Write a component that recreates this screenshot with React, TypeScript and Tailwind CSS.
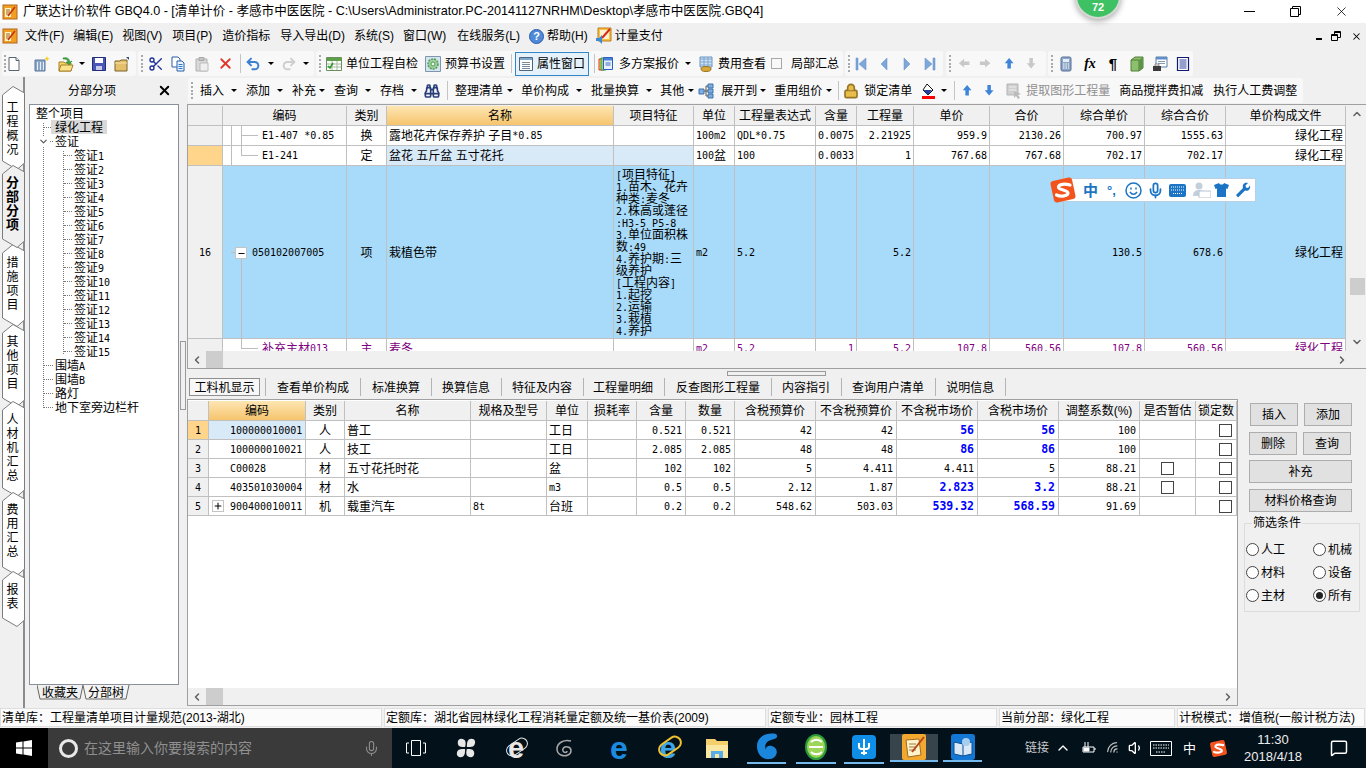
import type { ReactNode } from 'react';
import {
  Binoculars, ChevronDown, ChevronLeft, ChevronRight, ChevronUp, Lock, MessageSquare, Mic, Minus, Plus, Redo2,
  Scissors, Undo2, Volume1, Wifi, X,
} from 'lucide-react';

const mono = 'font-[family-name:"DejaVu_Sans_Mono",monospace] text-[10px]';
const line = 'border-[#c0c0c0]';
const topCols = 'grid grid-cols-[35px_124px_40px_227px_80px_41px_81px_41px_57px_76px_74px_81px_81px_120px]';
const lowCols = 'grid grid-cols-[21px_97px_39px_126px_76px_41px_49px_49px_49px_81px_81px_81px_81px_81px_56px_41px]';

const M = ({ children }: { children: ReactNode }) => <span className={mono}>{children}</span>;

// ascii parts of a mixed string get the narrow mono face
const Mix = ({ text }: { text: string }) => (
  <>
    {text.split(/([\x00-\x7f]+)/).map((p, i) => (i % 2 ? <M key={i}>{p}</M> : p))}
  </>
);

function C({ children, className = '' }: { children?: ReactNode; className?: string }) {
  return (
    <div className={`relative flex items-center overflow-hidden whitespace-nowrap border-r border-b ${line} ${className.includes('pt-[') ? '' : 'pt-px'} ${className}`}>
      {children}
    </div>
  );
}

// small toolbar pieces
const Arrow = ({ c = '' }: { c?: string }) => (
  <span className={`h-0 w-0 shrink-0 border-x-[3px] border-t-[3px] border-x-transparent border-t-black ${c}`} />
);
const Sep = ({ c = '' }: { c?: string }) => <span className={`h-[19px] w-px shrink-0 bg-[#c4c4c4] ${c}`} />;
const Grip = () => (
  <span className="flex h-[17px] w-[2px] shrink-0 flex-col justify-between">
    {[0, 1, 2, 3, 4].map((i) => <span key={i} className="h-[2px] w-[2px] bg-[#a9a9a9]" />)}
  </span>
);

function Svg({ children, c = '', s = 16 }: { children: ReactNode; c?: string; s?: number }) {
  return <svg width={s} height={s} viewBox="0 0 16 16" className={`shrink-0 ${c}`}>{children}</svg>;
}

const AppIcon = ({ c = '' }: { c?: string }) => (
  <Svg c={c}>
    <rect x="1" y="1" width="14" height="14" fill="#f0a020" stroke="#b5651d" />
    <path d="M3 4h6v9H3z" fill="#fff3c8" />
    <path d="M4 6h4M4 8h4M4 10h4" stroke="#a06020" />
    <path d="M6 12L13 3" stroke="#c0301a" strokeWidth="1.6" />
  </Svg>
);
const PageIc = ({ c = '' }: { c?: string }) => (
  <Svg c={c}><path d="M3 1.5h7l3 3v10H3z" fill="#fff" stroke="#59656f" /><path d="M10 1.5v3h3" fill="#dfe6ee" stroke="#59656f" /></Svg>
);
const MultiIc = ({ c = '' }: { c?: string }) => (
  <Svg c={c}>
    <path d="M1 4h10v11H1z" fill="#8ba6c9" stroke="#5d7699" />
    <path d="M3 6h1v8H3zM6 6h1v8H6zM9 6h1v8H9z" fill="#e8eef6" />
    <path d="M13 0l.8 2 2 .8-2 .8-.8 2-.8-2-2-.8 2-.8z" fill="#f4d020" />
  </Svg>
);
const OpenIc = ({ c = '' }: { c?: string }) => (
  <Svg c={c}>
    <path d="M1 6h5l1 1h6v8H1z" fill="#f4d568" stroke="#a8802a" />
    <path d="M1 15l2-6h12l-2 6z" fill="#fbe38c" stroke="#a8802a" />
    <path d="M5 2c4-1 6 0 7 4l2-1-3 4-3-3 2 .2C9.500 3.500 8 3 5 3z" fill="#3fa83f" stroke="#1f7a2a" strokeWidth=".5" />
  </Svg>
);
const SaveIc = ({ c = '' }: { c?: string }) => (
  <Svg c={c}>
    <path d="M1.500 1.500h13v13h-13z" fill="#4a57b5" stroke="#232c78" />
    <path d="M4 2h8v5H4z" fill="#fff" />
    <path d="M5 10h6v4H5z" fill="#c7cce8" />
  </Svg>
);
const FolderIc = ({ c = '' }: { c?: string }) => (
  <Svg c={c}>
    <path d="M1 5h5l1-1h6v11H1z" fill="#e4c06a" stroke="#7a6026" />
    <path d="M1 7h12" stroke="#f6e3a8" />
    <path d="M12 1l3 0 0 3z" fill="#33506e" />
  </Svg>
);
const CopyIc = ({ c = '' }: { c?: string }) => (
  <Svg c={c}>
    <path d="M2 1h6l2 2v8H2z" fill="#fff" stroke="#2a5fa8" />
    <path d="M7 5h5l2 2v8H7z" fill="#eaf3fc" stroke="#2a5fa8" />
    <path d="M8.500 8.500h4M8.500 10.500h4M8.500 12.500h4" stroke="#2a7ad0" />
  </Svg>
);
const PasteIc = ({ c = '' }: { c?: string }) => (
  <Svg c={c}>
    <path d="M2 3h11v12H2z" fill="#d9d9d9" stroke="#b0b0b0" />
    <path d="M5 1.500h5v3H5z" fill="#c4c4c4" stroke="#a8a8a8" />
    <path d="M6 7h8v8H6z" fill="#efefef" stroke="#bcbcbc" />
  </Svg>
);
const SheetIc = ({ c = '' }: { c?: string }) => (
  <Svg c={c}>
    <path d="M.5 1.500h15v13H.5z" fill="#fff" stroke="#6b8f5a" />
    <path d="M1 2h14v3H1z" fill="#5ea04a" />
    <path d="M6 5v9M11 5v9M1 8h14M1 11h14" stroke="#a8b8a0" />
    <path d="M2 10l2 2 3-5" fill="none" stroke="#2a9a2a" strokeWidth="1.500" />
  </Svg>
);
const GearIc = ({ c = '' }: { c?: string }) => (
  <Svg c={c}>
    <path d="M.5.5h15v15H.5z" fill="#d6e4ef" stroke="#7c97ae" />
    <circle cx="8" cy="8" r="5" fill="#9ed09a" stroke="#4e9a5a" strokeDasharray="2 1" strokeWidth="1.500" />
    <circle cx="8" cy="8" r="2" fill="#f0f6ee" stroke="#4e9a5a" />
  </Svg>
);
const PropIc = ({ c = '' }: { c?: string }) => (
  <Svg c={c}>
    <path d="M1.500 1.500h13v13h-13z" fill="#fff" stroke="#4d6780" />
    <path d="M2 2h12v2H2z" fill="#7fa7cc" />
    <path d="M4 6.500h8M4 8.500h8M4 10.500h8M4 12.500h8" stroke="#7a8a97" />
  </Svg>
);
const SchemeIc = ({ c = '' }: { c?: string }) => (
  <Svg c={c}>
    <path d="M1 3h5v11H1z" fill="#f3dc4c" stroke="#d33" />
    <path d="M3 2h5v12H3z" fill="#9bd07e" stroke="#3a9a3a" />
    <path d="M5.500 1.500h9v12h-9z" fill="#e8f0fb" stroke="#2a5fc8" />
    <path d="M6 2h8v2.500H6z" fill="#4a80d8" /><path d="M7.500 7h5M7.500 9h5" stroke="#3a68c0" />
  </Svg>
);
const CostIc = ({ c = '' }: { c?: string }) => (
  <Svg c={c}>
    <path d="M2 1h12v10H2z" fill="#cfe2f5" stroke="#6a94bd" />
    <path d="M2 3h12M2 6h12M2 9h12M6 1v10M10 1v10" stroke="#7ea7cf" />
    <ellipse cx="8" cy="13" rx="5" ry="2.500" fill="#d8a83a" stroke="#9c7420" />
  </Svg>
);
const NavIc = ({ d, c = '', fill = '#7ea8dc' }: { d: string; c?: string; fill?: string }) => (
  <Svg c={c}><path d={d} fill={fill} stroke="#5e8bc4" strokeWidth=".5" /></Svg>
);
const ArrowIc = ({ d, fill, c = '' }: { d: string; fill: string; c?: string }) => (
  <Svg c={c} s={14}><path d={d} fill={fill} /></Svg>
);
const CalcIc = ({ c = '' }: { c?: string }) => (
  <Svg c={c}>
    <rect x="3" y="1" width="10" height="14" rx="1.500" fill="#8ea6c8" stroke="#566f95" />
    <path d="M5 3h6v3H5z" fill="#e4eefa" />
    <path d="M5 8h1.500M7.500 8H9M10 8h1M5 10h1.500M7.500 10H9M10 10h1M5 12h1.500M7.500 12H9M10 12h1" stroke="#fff" />
  </Svg>
);
const CubeIc = ({ c = '' }: { c?: string }) => (
  <Svg c={c}>
    <path d="M2 4l4-3h8v11l-4 3H2z" fill="#8cc06c" stroke="#557f3d" />
    <path d="M2 4h8v11" fill="none" stroke="#557f3d" /><path d="M10 4l4-3v11l-4 3z" fill="#5c9545" />
  </Svg>
);
const WinPrintIc = ({ c = '' }: { c?: string }) => (
  <Svg c={c}>
    <path d="M4 1h11v10H4z" fill="#fff" stroke="#5a7fa8" /><path d="M4 1h11v2.500H4z" fill="#5e8fc8" />
    <path d="M6 5.500h7M6 7.500h7" stroke="#8a9cb0" />
    <path d="M1 10h8v5H1z" fill="#3a3a3a" /><path d="M3 8h4v2H3z" fill="#eee" stroke="#444" strokeWidth=".5" />
  </Svg>
);
const ListIc = ({ c = '' }: { c?: string }) => (
  <Svg c={c}>
    <path d="M2.500 1.500h11v13h-11z" fill="#fff" stroke="#101a70" strokeWidth="1.200" />
    <path d="M4.500 4h7M4.500 6h7M4.500 8h7M4.500 10h7M4.500 12h7" stroke="#2a3fa0" />
  </Svg>
);
const TreeIc = ({ c = '' }: { c?: string }) => (
  <Svg c={c}>
    <path d="M1 6h5v5H1zM10 1h5v4h-5zM10 6h5v4h-5zM10 11h5v4h-5z" fill="#7eaee0" stroke="#3e73ad" />
    <path d="M6 8h4M8 3h2M8 13h2M8 3v10" fill="none" stroke="#555" />
  </Svg>
);
const PaintIc = ({ c = '' }: { c?: string }) => (
  <Svg c={c}>
    <path d="M7 1l6 6-5 5-5-5z" fill="#fff" stroke="#111" />
    <path d="M3 7h9l-4 5z" fill="#1f3ea0" />
    <path d="M2 13h13v3H2z" fill="#f00" />
  </Svg>
);
const ExtractIc = ({ c = '' }: { c?: string }) => (
  <Svg c={c}>
    <path d="M1 1h11v11H1z" fill="#cfcfcf" stroke="#b5b5b5" />
    <path d="M3 4h7M3 7h7" stroke="#eee" /><path d="M8 8l7 3-3 1 2 3-2 1-2-3-2 2z" fill="#bbb" />
  </Svg>
);
const SogouLogo = ({ size = 28, c = '' }: { size?: number; c?: string }) => (
  <svg width={size} height={size} viewBox="0 0 28 28" className={`shrink-0 ${c}`}>
    <rect x="3" y="3" width="22" height="22" rx="3" transform="rotate(-12 14 14)" fill="#f3541d" />
    <path d="M21 9c-5-1.500-11-1-11.500 2S19 14 19 17s-7 4-11.500 2" fill="none" stroke="#fff" strokeWidth="3.200" strokeLinecap="round" />
  </svg>
);

function VText({ text, bold }: { text: string; bold?: boolean }) {
  return (
    <div className={`relative z-10 flex flex-col items-center ${bold ? 'text-[13px] font-bold' : ''}`}>
      {text.split('').map((ch, i) => <span key={i} className="h-[14px] leading-[14px]">{ch}</span>)}
    </div>
  );
}

const tabs = [
  { text: '工程概况', h: 'h-[84px]', svgH: 84, mt: '', pt: 'pt-[15px]' },
  { text: '分部分项', h: 'h-[83px]', svgH: 83, mt: '-mt-[5px]', pt: 'pt-[11px]', active: true },
  { text: '措施项目', h: 'h-[83px]', svgH: 83, mt: '-mt-[4px]', pt: 'pt-[12px]' },
  { text: '其他项目', h: 'h-[83px]', svgH: 83, mt: '-mt-[3px]', pt: 'pt-[11px]' },
  { text: '人材机汇总', h: 'h-[96px]', svgH: 96, mt: '-mt-[6px]', pt: 'pt-[12px]' },
  { text: '费用汇总', h: 'h-[84px]', svgH: 84, mt: '-mt-[5px]', pt: 'pt-[11px]' },
  { text: '报表', h: 'h-[56px]', svgH: 56, mt: '-mt-[5px]', pt: 'pt-[12px]' },
];

function SideTabs() {
  return (
    <div className="flex w-[25px] shrink-0 flex-col border-r-2 border-[#8c8c8c] pt-[9px] pl-[2px]">
      {tabs.map((t) => (
        <div key={t.text} className={`relative w-[23px] shrink-0 pr-[2px] ${t.h} ${t.mt} ${t.pt} ${t.active ? 'z-10' : ''}`}>
          <svg width="23" height={t.svgH} className="absolute left-0 top-0">
            <path
              d={`M.5 9L11 .5 22.500 7V${t.svgH - 7}L15 ${t.svgH - .5}.5 ${t.svgH - 9}z`}
              fill={t.active ? '#f0f0f0' : '#fff'}
              stroke="#7c7c7c"
            />
          </svg>
          <VText text={t.text} bold={t.active} />
        </div>
      ))}
    </div>
  );
}

function TreeRow({ level, children, sel }: { level: 1 | 2; children: ReactNode; sel?: boolean }) {
  return (
    <div className={`flex h-[14px] items-center ${level === 1 ? 'pl-[14px]' : 'pl-[34px]'}`}>
      <span className={`mr-[2px] shrink-0 border-t border-dotted border-[#777] ${level === 1 ? 'w-[9px]' : 'w-[8px]'}`} />
      <span className={`h-[14px] whitespace-nowrap pt-px leading-[14px] ${sel ? 'bg-[#d9d9d9] px-[4px] -ml-[4px]' : ''}`}>{children}</span>
    </div>
  );
}

function Tree() {
  const certs = Array.from({ length: 15 }, (_, i) => i + 1);
  return (
    <div className="relative h-[581px] w-[150px] overflow-hidden border border-[#8a8f99] bg-white pt-px">
      <span className="absolute left-[13px] top-[18px] h-[285px] border-l border-dotted border-[#777]" />
      <span className="absolute left-[33px] top-[46px] h-[203px] border-l border-dotted border-[#777]" />
      <div className="h-[14px] pl-[6px] pt-px leading-[14px]">整个项目</div>
      <TreeRow level={1} sel>绿化工程</TreeRow>
      <div className="relative">
        <TreeRow level={1}>签证</TreeRow>
        <ChevronDown size={11} strokeWidth={2.5} className="absolute left-[8px] top-[2px] bg-white text-[#555]" />
      </div>
      {certs.map((n) => (
        <TreeRow key={n} level={2}>签证<M>{n}</M></TreeRow>
      ))}
      <TreeRow level={1}>围墙<M>A</M></TreeRow>
      <TreeRow level={1}>围墙<M>B</M></TreeRow>
      <TreeRow level={1}>路灯</TreeRow>
      <TreeRow level={1}>地下室旁边栏杆</TreeRow>
    </div>
  );
}

function BottomTabs() {
  return (
    <div className="flex h-[19px] items-start pl-[8px]">
      <div className="relative flex h-[15px] w-[46px] justify-center pt-px">
        <svg width="46" height="15" className="absolute left-0 top-0"><path d="M0 0L3 14H43L46 0" fill="#f0f0f0" stroke="#666" /></svg>
        <span className="relative leading-[14px]">收藏夹</span>
      </div>
      <div className="relative -ml-px flex h-[15px] w-[48px] justify-center pt-px">
        <svg width="48" height="15" className="absolute left-0 top-0"><path d="M1 0L4 14H44L47 0" fill="#f4f4f4" stroke="#666" /></svg>
        <span className="relative leading-[14px]">分部树</span>
      </div>
    </div>
  );
}

function Toolbar1() {
  const grp = 'flex h-[25px] shrink-0 items-center rounded-[3px] bg-[#f8f8f8]';
  return (
    <div className="flex h-[28px] items-center pl-[2px] pt-[1px]">
      <div className={`${grp} w-[134px] pl-[2px]`}>
        <Grip /><PageIc />
        <MultiIc c="ml-[12px]" /><OpenIc c="ml-[8px]" /><Arrow c="ml-[5px]" /><SaveIc c="ml-[6px]" /><FolderIc c="ml-[7px]" />
      </div>
      <div className={`${grp} ml-[2px] w-[176px] pl-[3px]`}>
        <Grip />
        <Scissors size={16} className="ml-[5px] shrink-0 text-[#1c2f9a]" />
        <CopyIc c="ml-[6px]" /><PasteIc c="ml-[8px]" />
        <X size={17} strokeWidth={2.5} className="ml-[7px] shrink-0 text-[#e0352b]" />
        <Sep c="ml-[6px]" />
        <Undo2 size={16} strokeWidth={3} className="ml-[4px] shrink-0 text-[#3d7fd1]" />
        <Arrow c="ml-[7px]" />
        <Redo2 size={16} strokeWidth={3} className="ml-[7px] shrink-0 text-[#cfcfcf]" />
        <Arrow c="ml-[6px] border-t-[#9a9a9a]" />
      </div>
      <div className={`${grp} ml-[2px] w-[527px] pl-[3px]`}>
        <Grip /><SheetIc c="ml-[5px]" />
        <span className="ml-[4px]">单位工程自检</span>
        <GearIc c="ml-[7px]" />
        <span className="ml-[4px]">预算书设置</span>
        <Sep c="ml-[6px]" />
        <div className="ml-[3px] flex h-[24px] w-[74px] shrink-0 items-center border border-[#2f86c8] bg-[#e5f1fb] pl-[2px]">
          <PropIc /><span className="ml-[3px]">属性窗口</span>
        </div>
        <Sep c="ml-[5px]" />
        <SchemeIc c="ml-[3px]" />
        <span className="ml-[5px]">多方案报价</span>
        <Arrow c="ml-[6px]" />
        <CostIc c="ml-[7px]" />
        <span className="ml-[4px]">费用查看</span>
        <span className="ml-[5px] h-[11px] w-[11px] shrink-0 border border-[#a8a8a8] bg-[#f8f8f8]" />
        <span className="ml-[9px]">局部汇总</span>
      </div>
      <div className={`${grp} ml-[2px] w-[98px] pl-[3px]`}>
        <Grip />
        <NavIc c="ml-[3px]" d="M3 2h2v12H3zM13 2v12L6 8z" />
        <NavIc c="ml-[7px]" d="M11 2v12L5 8z" />
        <NavIc c="ml-[7px]" d="M5 2v12l6-6z" />
        <NavIc c="ml-[7px]" d="M11 2h2v12h-2zM3 2v12l7-6z" />
      </div>
      <div className={`${grp} ml-[3px] w-[100px] pl-[3px]`}>
        <Grip />
        <ArrowIc c="ml-[7px]" fill="#c8c8c8" d="M1 7l6-5v3h6v4H7v3z" />
        <ArrowIc c="ml-[7px]" fill="#c8c8c8" d="M13 7L7 2v3H1v4h6v3z" />
        <ArrowIc c="ml-[10px]" fill="#3e84d8" d="M7 1l5 6H9v6H5V7H2z" />
        <ArrowIc c="ml-[8px]" fill="#c8c8c8" d="M7 13l5-6H9V1H5v6H2z" />
      </div>
      <div className={`${grp} ml-[2px] w-[145px] pl-[3px]`}>
        <Grip />
        <CalcIc c="ml-[5px]" />
        <span className="ml-[8px] w-[16px] text-center font-[family-name:'Liberation_Serif',serif] text-[14px] font-bold italic">fx</span>
        <span className="ml-[7px] w-[16px] text-center text-[15px] font-bold">¶</span>
        <CubeIc c="ml-[8px]" /><WinPrintIc c="ml-[7px]" /><ListIc c="ml-[7px]" />
      </div>
    </div>
  );
}

function Toolbar2() {
  return (
    <div className="flex h-[27px] items-start pt-[1px] pl-px">
      <div className="flex h-[25px] w-[1115px] shrink-0 items-center rounded-[3px] bg-[#f8f8f8] pl-[3px]">
        <Grip />
        <span className="ml-[7px]">插入</span><Arrow c="ml-[7px]" />
        <span className="ml-[9px]">添加</span><Arrow c="ml-[7px]" />
        <span className="ml-[9px]">补充</span><Arrow c="ml-[3px]" />
        <span className="ml-[9px]">查询</span><Arrow c="ml-[7px]" />
        <span className="ml-[9px]">存档</span><Arrow c="ml-[7px]" />
        <Binoculars size={16} strokeWidth={2.5} className="ml-[7px] shrink-0 text-[#2a3f7a]" />
        <Sep c="ml-[7px]" />
        <span className="ml-[7px]">整理清单</span><Arrow c="ml-[4px]" />
        <span className="ml-[8px]">单价构成</span><Arrow c="ml-[7px]" />
        <span className="ml-[9px]">批量换算</span><Arrow c="ml-[7px]" />
        <span className="ml-[8px]">其他</span><Arrow c="ml-[4px]" />
        <TreeIc c="ml-[4px]" />
        <span className="ml-[7px]">展开到</span><Arrow c="ml-[3px]" />
        <span className="ml-[8px]">重用组价</span><Arrow c="ml-[4px]" />
        <Sep c="ml-[6px]" />
        <Lock size={16} strokeWidth={2.5} className="ml-[4px] shrink-0 fill-[#e8bd4a] text-[#96742a]" />
        <span className="ml-[5px]">锁定清单</span>
        <PaintIc c="ml-[8px]" /><Arrow c="ml-[5px]" />
        <Sep c="ml-[7px]" />
        <ArrowIc c="ml-[6px]" fill="#3e84d8" d="M7 1l5 6H9v6H5V7H2z" />
        <ArrowIc c="ml-[8px]" fill="#3e84d8" d="M7 13l5-6H9V1H5v6H2z" />
        <ExtractIc c="ml-[9px]" />
        <span className="ml-[4px] text-[#8f8f8f]">提取图形工程量</span>
        <span className="ml-[9px]">商品搅拌费扣减</span>
        <span className="ml-[10px]">执行人工费调整</span>
      </div>
    </div>
  );
}

const HL = 'absolute border-[#bdbdbd]';

function Head({ labels, orange }: { labels: string[]; orange: number }) {
  return (
    <>
      {labels.map((l, i) => (
        <C key={i} className={`justify-center ${i === orange ? 'bg-gradient-to-b from-[#fde6b2] to-[#f6c46c]' : 'bg-[#f0f0f0]'}`}>{l}</C>
      ))}
    </>
  );
}

const features = [
  '[项目特征]', '1.苗木、花卉', '种类:麦冬', '2.株高或蓬径', ':H3-5 P5-8', '3.单位面积株', '数:49', '4.养护期:三',
  '级养护', '[工程内容]', '1.起挖', '2.运输', '3.栽植', '4.养护',
];

function TopGrid() {
  const num = `justify-end pr-[2px] ${mono}`;
  const lft = `pl-[2px] ${mono}`;
  return (
    <div className="flex h-[265px] shrink-0 flex-col border-t border-b border-l border-[#a0a0a0] pt-px">
      <div className="flex h-[245px]">
        <div className="w-[1158px] shrink-0 overflow-hidden">
          <div className={`${topCols} h-[20px]`}>
            <Head orange={3} labels={['', '编码', '类别', '名称', '项目特征', '单位', '工程量表达式', '含量', '工程量', '单价', '合价', '综合单价', '综合合价', '单价构成文件']} />
          </div>
          <div className={`${topCols} h-[20px] bg-white`}>
            <C className="bg-[#f0f0f0]" />
            <C className={`pl-[39px] ${mono}`}>
              <span className={`${HL} left-[8px] top-0 h-full border-l`} />
              <span className={`${HL} left-[18px] top-0 h-full border-l`} />
              <span className={`${HL} left-[18px] top-[9px] w-[17px] border-t`} />
              E1-407 *0.85
            </C>
            <C className="justify-center">换</C>
            <C className="pl-[2px]">露地花卉保存养护 子目<M>*0.85</M></C>
            <C />
            <C className={lft}>100m2</C>
            <C className={lft}>QDL*0.75</C>
            <C className={num}>0.0075</C>
            <C className={num}>2.21925</C>
            <C className={num}>959.9</C>
            <C className={num}>2130.26</C>
            <C className={num}>700.97</C>
            <C className={num}>1555.63</C>
            <C className="justify-end pr-[2px]">绿化工程</C>
          </div>
          <div className={`${topCols} h-[20px] bg-white`}>
            <C className="bg-[#ffd58c]" />
            <C className={`pl-[39px] ${mono}`}>
              <span className={`${HL} left-[8px] top-0 h-full border-l`} />
              <span className={`${HL} left-[18px] top-0 h-[9px] border-l`} />
              <span className={`${HL} left-[18px] top-[9px] w-[17px] border-t`} />
              E1-241
            </C>
            <C className="justify-center">定</C>
            <C className="bg-[#d8e9f8] pl-[2px]">盆花 五斤盆 五寸花托</C>
            <C className="bg-[#d8e9f8]" />
            <C className="pl-[2px]"><M>100</M>盆</C>
            <C className={lft}>100</C>
            <C className={num}>0.0033</C>
            <C className={num}>1</C>
            <C className={num}>767.68</C>
            <C className={num}>767.68</C>
            <C className={num}>702.17</C>
            <C className={num}>702.17</C>
            <C className="justify-end pr-[2px]">绿化工程</C>
          </div>
          <div className={`${topCols} h-[173px] bg-[#a8daf9]`}>
            <C className={`bg-[#f0f0f0] justify-center ${mono}`}>16</C>
            <C className={`pl-[29px] ${mono}`}>
              <span className={`${HL} left-[8px] top-[86px] w-[4px] border-t`} />
              <span className="absolute left-[12px] top-[81px] flex h-[12px] w-[12px] items-center justify-center border border-[#c4c4c4] bg-white">
                <Minus size={9} strokeWidth={2.5} className="text-black" />
              </span>
              <span className={`${HL} left-[18px] top-[93px] h-[80px] border-l`} />
              050102007005
            </C>
            <C className="justify-center">项</C>
            <C className="pl-[2px]">栽植色带</C>
            <C className="items-start overflow-hidden pl-[2px] pt-[3px]">
              <div className="flex flex-col">
                {features.map((f) => <span key={f} className="h-[12px] text-[12px] leading-[12px]"><Mix text={f} /></span>)}
              </div>
            </C>
            <C className={lft}>m2</C>
            <C className={lft}>5.2</C>
            <C />
            <C className={num}>5.2</C>
            <C /><C />
            <C className={num}>130.5</C>
            <C className={num}>678.6</C>
            <C className="justify-end pr-[2px]">绿化工程</C>
          </div>
          <div className={`${topCols} h-[20px] bg-white text-[#800080]`}>
            <C className="bg-[#f0f0f0]" />
            <C className="pl-[39px]">
              <span className={`${HL} left-[18px] top-0 h-[10px] border-l`} />
              <span className={`${HL} left-[18px] top-[9px] w-[17px] border-t`} />
              补充主材<M>013</M>
            </C>
            <C className="justify-center">主</C>
            <C className="pl-[2px]">麦冬</C>
            <C />
            <C className={lft}>m2</C>
            <C className={lft}>5.2</C>
            <C className={num}>1</C>
            <C className={num}>5.2</C>
            <C className={num}>107.8</C>
            <C className={num}>560.56</C>
            <C className={num}>107.8</C>
            <C className={num}>560.56</C>
            <C className="justify-end pr-[2px]">绿化工程</C>
          </div>
        </div>
        <div className="flex w-[20px] shrink-0 flex-col items-center bg-[#f0f0f0] pl-[2px]">
          <ChevronUp size={12} strokeWidth={3} className="mt-[2px] text-[#606060]" />
          <div className="mt-[158px] h-[17px] w-[15px] bg-[#cdcdcd]" />
          <ChevronDown size={12} strokeWidth={3} className="mt-[41px] text-[#606060]" />
        </div>
      </div>
      <div className="flex h-[17px] items-center bg-[#f0f0f0]">
        <ChevronLeft size={12} strokeWidth={3} className="ml-[3px] text-[#606060]" />
        <span className="ml-[3px] h-[17px] w-[17px] bg-[#cdcdcd]" />
        <ChevronRight size={12} strokeWidth={3} className="ml-[1113px] text-[#606060]" />
      </div>
    </div>
  );
}

const lowerTabs = [
  ['查看单价构成', 'ml-[11px]'],
  ['标准换算', 'ml-[11px]'],
  ['换算信息', 'ml-[10px]'],
  ['特征及内容', 'ml-[10px]'],
  ['工程量明细', 'ml-[9px]'],
  ['反查图形工程量', 'ml-[11px]'],
  ['内容指引', 'ml-[10px]'],
  ['查询用户清单', 'ml-[10px]'],
  ['说明信息', 'ml-[10px]'],
];

function LowerTabs() {
  return (
    <div className="flex h-[18px] shrink-0 items-center pl-[2px]">
      <div className="flex h-[18px] w-[71px] shrink-0 items-center justify-center border border-[#8f8f8f] bg-[#f7f7f7] pt-px">工料机显示</div>
      <span className="ml-[5px] h-[18px] w-px bg-[#b4b4b4]" />
      {lowerTabs.map(([t, a]) => (
        <div key={t} className="flex items-center">
          <span className={`${a} whitespace-nowrap pt-px`}>{t}</span>
          <span className="ml-[11px] h-[18px] w-px bg-[#b4b4b4]" />
        </div>
      ))}
    </div>
  );
}

const Check = () => <span className="-mt-px h-[13px] w-[13px] border border-[#444] bg-white" />;

const lowRows = [
  { n: '1', code: '100000010001', kind: '人', name: '普工', spec: '', unit: <>工日</>, a: '0.521', b: '0.521', c: '42', d: '42', e: '56', f: '56', g: '100', blueE: true, est: false, first: true },
  { n: '2', code: '100000010021', kind: '人', name: '技工', spec: '', unit: <>工日</>, a: '2.085', b: '2.085', c: '48', d: '48', e: '86', f: '86', g: '100', blueE: true, est: false },
  { n: '3', code: 'C00028', kind: '材', name: '五寸花托时花', spec: '', unit: <>盆</>, a: '102', b: '102', c: '5', d: '4.411', e: '4.411', f: '5', g: '88.21', blueE: false, est: true },
  { n: '4', code: '403501030004', kind: '材', name: '水', spec: '', unit: <M>m3</M>, a: '0.5', b: '0.5', c: '2.12', d: '1.87', e: '2.823', f: '3.2', g: '88.21', blueE: true, est: true },
  { n: '5', code: '900400010011', kind: '机', name: '载重汽车', spec: '8t', unit: <>台班</>, a: '0.2', b: '0.2', c: '548.62', d: '503.03', e: '539.32', f: '568.59', g: '91.69', blueE: true, est: false, plus: true },
];

function LowerGrid() {
  const num = `justify-end pr-[3px] ${mono}`;
  const blue = 'justify-end pr-[3px] font-[family-name:"DejaVu_Sans_Mono",monospace] text-[11.5px] font-bold text-[#0000ff]';
  return (
    <div className="flex h-[307px] w-[1051px] shrink-0 flex-col border border-[#a0a0a0] bg-white">
      <div className="h-[288px] w-[1049px] overflow-hidden pt-px">
        <div className={`${lowCols} h-[20px]`}>
          <Head orange={1} labels={['', '编码', '类别', '名称', '规格及型号', '单位', '损耗率', '含量', '数量', '含税预算价', '不含税预算价', '不含税市场价', '含税市场价', '调整系数(%)', '是否暂估', '锁定数']} />
        </div>
        {lowRows.map((r) => (
          <div key={r.n} className={`${lowCols} h-[19px]`}>
            <C className={`justify-center ${mono} ${r.first ? 'bg-[#ffd58c]' : 'bg-[#f0f0f0]'}`}>{r.n}</C>
            <C className={`pl-[21px] ${mono} ${r.first ? 'bg-[#d8e9f8]' : ''}`}>
              {r.plus && (
                <span className="absolute left-[3px] top-[3px] flex h-[12px] w-[12px] items-center justify-center border border-[#c4c4c4] bg-white">
                  <Plus size={10} strokeWidth={2.5} className="text-black" />
                </span>
              )}
              {r.code}
            </C>
            <C className="justify-center">{r.kind}</C>
            <C className="pl-[2px]">{r.name}</C>
            <C className={`pl-[2px] ${mono}`}>{r.spec}</C>
            <C className="pl-[2px]">{r.unit}</C>
            <C />
            <C className={num}>{r.a}</C>
            <C className={num}>{r.b}</C>
            <C className={num}>{r.c}</C>
            <C className={num}>{r.d}</C>
            <C className={r.blueE ? blue : num}>{r.e}</C>
            <C className={r.blueE ? blue : num}>{r.f}</C>
            <C className={num}>{r.g}</C>
            <C className="justify-center">{r.est && <Check />}</C>
            <C className="justify-end pr-[4px]"><Check /></C>
          </div>
        ))}
      </div>
      <div className="flex h-[17px] items-center bg-[#f0f0f0]">
        <ChevronLeft size={12} strokeWidth={3} className="ml-[3px] text-[#606060]" />
        <span className="ml-[3px] h-[17px] w-[17px] bg-[#cdcdcd]" />
        <ChevronRight size={12} strokeWidth={3} className="ml-auto mr-[3px] text-[#606060]" />
      </div>
    </div>
  );
}

const Btn = ({ children, c = '' }: { children: ReactNode; c?: string }) => (
  <div className={`flex h-[23px] shrink-0 items-center justify-center border border-[#adadad] bg-[#e1e1e1] pt-px ${c}`}>{children}</div>
);

const Radio = ({ label, on }: { label: string; on?: boolean }) => (
  <div className="flex h-[23px] items-center">
    <span className="flex h-[13px] w-[13px] shrink-0 items-center justify-center rounded-full border border-[#444] bg-white">
      {on && <span className="h-[7px] w-[7px] rounded-full bg-[#222]" />}
    </span>
    <span className="ml-[2px]">{label}</span>
  </div>
);

function RightPanel() {
  return (
    <div className="flex flex-1 flex-col pl-[11px] pt-[4px]">
      <div className="flex items-end">
        <Btn c="ml-px w-[48px]">插入</Btn><Btn c="ml-[6px] h-[22px] w-[48px]">添加</Btn>
      </div>
      <div className="mt-[6px] flex">
        <Btn c="w-[48px]">删除</Btn><Btn c="ml-[6px] w-[48px]">查询</Btn>
      </div>
      <Btn c="mt-[5px] w-[103px]">补充</Btn>
      <Btn c="mt-[6px] w-[103px]">材料价格查询</Btn>
      <div className="relative -ml-[5px] mt-[11px] h-[89px] w-[116px] border border-[#dcdcdc] pl-[1px] pt-[14px]">
        <span className="absolute -top-[9px] left-[7px] bg-[#f0f0f0] px-px leading-[16px]">筛选条件</span>
        <div className="grid grid-cols-[67px_1fr]">
          <Radio label="人工" /><Radio label="机械" />
          <Radio label="材料" /><Radio label="设备" />
          <Radio label="主材" /><Radio label="所有" on />
        </div>
      </div>
    </div>
  );
}

function StatusBar() {
  const cell = 'flex h-[19px] shrink-0 items-center border border-[#dedede] bg-[#fbfbfb] pl-px pt-px';
  return (
    <div className="flex h-[20px] shrink-0 items-start">
      <div className={`${cell} w-[382px]`}>清单库：工程量清单项目计量规范(2013-湖北)</div>
      <div className={`${cell} ml-[2px] w-[382px]`}>定额库：湖北省园林绿化工程消耗量定额及统一基价表(2009)</div>
      <div className={`${cell} ml-[2px] w-[229px]`}>定额专业：园林工程</div>
      <div className={`${cell} ml-[2px] w-[176px]`}>当前分部：绿化工程</div>
      <div className={`${cell} ml-[2px] w-[188px]`}>计税模式：增值税(一般计税方法)</div>
    </div>
  );
}

function TaskApp({ children, c, active }: { children: ReactNode; c: string; active?: boolean }) {
  return (
    <div className={`flex h-full shrink-0 items-center justify-center border-b-2 border-[#76b9ed] ${active ? 'bg-[#38444b]' : ''} ${c}`}>
      {children}
    </div>
  );
}

function Taskbar() {
  return (
    <div className="flex h-[40px] shrink-0 items-center bg-[#03111a] text-white">
      <div className="flex h-full w-[48px] shrink-0 items-center justify-center bg-black">
        <svg width="16" height="16" viewBox="0 0 16 16"><path d="M0 2.500l6.500-1v6H0zM7.500 1.400L16 0v7.500H7.500zM0 8.500h6.500v6l-6.500-1zM7.500 8.500H16V16l-8.500-1.400z" fill="#fff" /></svg>
      </div>
      <div className="flex h-full w-[344px] shrink-0 items-center bg-[#3a3a3a]">
        <span className="ml-[11px] h-[19px] w-[19px] shrink-0 rounded-full border-[3px] border-[#e8e8e8]" />
        <span className="ml-[6px] text-[14px] leading-none text-[#8f8f8f]">在这里输入你要搜索的内容</span>
        <Mic size={17} strokeWidth={1.500} className="ml-[111px] shrink-0 text-[#8f8f8f]" />
      </div>
      <div className="flex h-full w-[48px] shrink-0 items-center justify-center">
        <svg width="20" height="18" viewBox="0 0 20 18" fill="none" stroke="#fff"><path d="M5.500 1.500h9v15h-9zM3 4H.5v10H3M17 4h2.500v10H17" /></svg>
      </div>
      <div className="ml-[2px] flex h-full w-[48px] shrink-0 items-center justify-center">
        <svg width="22" height="22" viewBox="0 0 24 24" fill="#e8e8e8"><path d="M11 11C7 11 3 11 3 6c0-4 4-5 7-3 2 1 2 5 1 8zM13 11c0-4 0-9 5-9 4 0 5 4 3 7-1 2-5 2-8 2zM13 13c4 0 8 0 8 5 0 4-4 5-7 3-2-1-2-5-1-8zM11 13c0 4 0 9-5 9-4 0-5-4-3-7 1-2 5-2 8-2z" /></svg>
      </div>
      <div className="flex h-full w-[52px] shrink-0 items-center justify-center">
        <span className="relative font-[family-name:'Liberation_Sans',sans-serif] text-[29px] font-bold leading-none text-[#e8e8e8]">e
          <span className="absolute -left-[3px] top-[7px] h-[12px] w-[24px] -rotate-[35deg] rounded-full border border-[#e8e8e8]" />
        </span>
      </div>
      <div className="flex h-full w-[46px] shrink-0 items-center justify-center">
        <svg width="20" height="20" viewBox="0 0 20 20" fill="none" stroke="#a8a8a8" strokeWidth="1.500"><path d="M16 3C9 1 2 5 2 11s7 8 11 6 4-7 0-8-6 2-5 4 4 2 4 0" /></svg>
      </div>
      <div className="ml-[6px] flex h-full w-[50px] shrink-0 items-center justify-center">
        <span className="font-[family-name:'Liberation_Sans',sans-serif] text-[32px] font-bold leading-none text-[#1a8be0]">e</span>
      </div>
      <div className="flex h-full w-[48px] shrink-0 items-center justify-center">
        <span className="relative font-[family-name:'Liberation_Sans',sans-serif] text-[30px] font-bold leading-none text-[#3ba7ea]">e
          <span className="absolute -left-[3px] top-[6px] h-[14px] w-[26px] -rotate-[35deg] rounded-full border-2 border-[#f0c030]" />
        </span>
      </div>
      <div className="flex h-full w-[50px] shrink-0 items-center justify-center">
        <svg width="24" height="22" viewBox="0 0 24 22">
          <path d="M1 2h9l2 2h11v17H1z" fill="#f4cf6e" /><path d="M1 8h22v13H1z" fill="#fbe6a2" />
          <path d="M6 14h12v7H6z" fill="#56aee6" /><path d="M10 17h4v4h-4z" fill="#fbe6a2" />
        </svg>
      </div>
      <div className="ml-[5px] w-[39px] shrink-0"><TaskApp c="h-[40px] w-full">
        <svg width="26" height="30" viewBox="0 0 26 30"><path d="M22 2C12 0 3 5 3 14s6 14 13 13 9-9 4-12-9 0-8 3c-2-4 0-9 5-10s8-3 5-6z" fill="#1a87dd" /></svg>
      </TaskApp></div>
      <div className="ml-[10px] w-[40px] shrink-0"><TaskApp c="h-[40px] w-full">
        <svg width="24" height="30" viewBox="0 0 24 30" fill="none">
          <ellipse cx="12" cy="15" rx="10" ry="12" fill="#9bd55a" stroke="#2a9a3a" strokeWidth="2" />
          <path d="M5 15h14M7 20c3 3 8 3 11 0M7 10c3-3 8-3 11 0" stroke="#fff" strokeWidth="2" />
        </svg>
      </TaskApp></div>
      <div className="ml-[8px] w-[40px] shrink-0"><TaskApp c="h-[40px] w-full">
        <svg width="24" height="30" viewBox="0 0 24 30">
          <rect y="3" width="24" height="24" rx="4" fill="#0f8ee8" />
          <path d="M12 7v16M7 11v4c0 2 2 2 5 2s5 0 5-2v-4M9 21h6" fill="none" stroke="#fff" strokeWidth="2" />
        </svg>
      </TaskApp></div>
      <div className="ml-[6px] w-[48px] shrink-0"><TaskApp c="h-[40px] w-full" active>
        <svg width="24" height="26" viewBox="0 0 24 26">
          <rect width="24" height="26" rx="2" fill="#f2a72e" />
          <path d="M4 6l13-1 2 16-13 2z" fill="#fff3cc" stroke="#a06a20" />
          <path d="M7 10h7M7 13h7M7 16h7" stroke="#9a7a40" />
          <path d="M10 18L22 3" stroke="#b5451d" strokeWidth="2" />
        </svg>
      </TaskApp></div>
      <div className="ml-[5px] w-[39px] shrink-0"><TaskApp c="h-[40px] w-full">
        <svg width="24" height="26" viewBox="0 0 24 26">
          <rect width="24" height="26" rx="3" fill="#1577d4" />
          <path d="M3 8l9 2 9-2v12l-9 2-9-2z" fill="#dbe9f7" stroke="#0b4f94" />
          <path d="M12 10v12" stroke="#0b4f94" /><circle cx="15" cy="8" r="4" fill="#a7cdf0" />
        </svg>
      </TaskApp></div>
      <span className="ml-[43px] shrink-0 text-[#c9c9c9]">链接</span>
      <ChevronUp size={16} className="ml-[6px] shrink-0" />
      <svg width="16" height="14" viewBox="0 0 16 14" className="ml-[10px] shrink-0" fill="none" stroke="#fff"><path d="M2 6h11v5H2zM13 8h2" /><path d="M3 7h5v3H3z" fill="#fff" /><path d="M4 1v5M7 1v5" /></svg>
      <Wifi size={15} className="ml-[9px] shrink-0 -rotate-45 text-[#bdbdbd]" />
      <Volume1 size={16} className="ml-[7px] shrink-0" />
      <svg width="22" height="15" viewBox="0 0 22 15" className="ml-[6px] shrink-0" fill="none" stroke="#fff"><path d="M.5.5h21v14H.5z" /><path d="M3 4h16M3 7h16M6 11h10" strokeDasharray="1.500 1" /></svg>
      <span className="ml-[11px] shrink-0 text-[13px]">中</span>
      <SogouLogo size={19} c="ml-[13px]" />
      <div className="ml-[14px] flex w-[62px] shrink-0 flex-col items-center text-[#ededed]">
        <span className="text-[13px] leading-[17px]">11:30</span>
        <span className="text-[13px] leading-[17px]">2018/4/18</span>
      </div>
      <MessageSquare size={18} className="ml-[26px] shrink-0" />
    </div>
  );
}

const SogouBar = () => (
  <div className="absolute left-[1049px] top-[176px] z-20 flex items-center">
    <SogouLogo c="relative z-10" />
    <div className="-ml-[17px] flex h-[24px] w-[196px] items-center border border-[#b9cfe2] bg-white pl-[22px] text-[#1b75c4]">
      <span className="text-[15px] font-bold leading-none">中</span>
      <span className="ml-[9px] text-[13px] font-bold leading-none">°,</span>
      <svg width="17" height="17" viewBox="0 0 17 17" className="ml-[9px] shrink-0" fill="none" stroke="#1b75c4" strokeWidth="1.500"><circle cx="8.500" cy="8.500" r="7.500" /><path d="M5 10c2 3 5 3 7 0M6 5.500v2M11 5.500v2" /></svg>
      <Mic size={17} strokeWidth={2.5} className="ml-[5px] shrink-0" />
      <svg width="17" height="13" viewBox="0 0 17 13" className="ml-[5px] shrink-0"><rect width="17" height="13" rx="2" fill="#1b75c4" /><path d="M2 3h13M2 6h13M4 9.500h9" stroke="#fff" strokeDasharray="1 1" /></svg>
      <svg width="18" height="16" viewBox="0 0 18 16" className="ml-[7px] shrink-0"><circle cx="6" cy="4" r="3.500" fill="#c3cfdb" /><path d="M0 14c0-5 3-6 6-6s5 1 5 3v3z" fill="#c3cfdb" /><rect x="6" y="9" width="12" height="7" rx="1" fill="#fff" stroke="#b3c3d3" /></svg>
      <svg width="15" height="14" viewBox="0 0 15 14" className="ml-[3px] shrink-0"><path d="M5 0L0 2l1.500 4 1.500-.5V14h9V5.500l1.500.5L15 2l-5-2c-.5 2-4.500 2-5 0z" fill="#1b75c4" /></svg>
      <svg width="16" height="16" viewBox="0 0 16 16" className="ml-[6px] shrink-0"><path d="M1 13l7-7c-1-3 1-6 5-5l-2.500 2.500.5 2 2 .5L15 3.500c.8 4-2 6-5 5l-7 7z" fill="#1b75c4" /></svg>
    </div>
  </div>
);

export default function App() {
  return (
    <div className="relative flex h-[768px] w-[1366px] flex-col overflow-hidden bg-[#f0f0f0] font-[family-name:'Liberation_Sans','Noto_Sans_CJK_SC',sans-serif] text-[12px] leading-none text-black">
      {/* title bar */}
      <div className="flex h-[23px] shrink-0 items-center bg-white pl-[2px]">
        <AppIcon />
        <span className="ml-[5px] whitespace-nowrap text-[12.6px]">广联达计价软件 GBQ4.0 - [清单计价 - 孝感市中医医院 - C:\Users\Administrator.PC-20141127NRHM\Desktop\孝感市中医医院.GBQ4]</span>
        <div className="ml-auto flex items-center">
          <span className="h-px w-[11px] bg-black" />
          <svg width="11" height="11" viewBox="0 0 11 11" className="ml-[35px]" fill="none" stroke="#000"><path d="M.5 2.500h8v8h-8zM2.500 2.500v-2h8v8h-2" /></svg>
          <X size={15} strokeWidth={1.25} className="ml-[33px] mr-[17px]" />
        </div>
      </div>
      {/* menu bar */}
      <div className="flex h-[26px] shrink-0 items-center pl-[2px]">
        <AppIcon />
        <span className="ml-[7px]">文件(F)</span>
        <span className="ml-[9px]">编辑(E)</span>
        <span className="ml-[9px]">视图(V)</span>
        <span className="ml-[10px]">项目(P)</span>
        <span className="ml-[10px]">造价指标</span>
        <span className="ml-[10px]">导入导出(D)</span>
        <span className="ml-[9px]">系统(S)</span>
        <span className="ml-[9px]">窗口(W)</span>
        <span className="ml-[11px]">在线服务(L)</span>
        <span className="ml-[9px] flex h-[15px] w-[15px] shrink-0 items-center justify-center rounded-full border border-[#2a5cb0] bg-[#4f8ad8] text-[11px] font-bold text-white">?</span>
        <span className="ml-[3px]">帮助(H)</span>
        <svg width="16" height="18" viewBox="0 0 16 18" className="ml-[8px] shrink-0">
          <path d="M2 1h13v13H2z" fill="#f6c243" stroke="#c27a1a" /><path d="M4 3h9v9H4z" fill="#fff3d0" />
          <path d="M6 11L14 2" stroke="#d32a1a" strokeWidth="2" /><path d="M0 11h3l3-3v9l-3-3H0z" fill="#3a8ad8" />
        </svg>
        <span className="ml-[3px]">计量支付</span>
        <div className="ml-auto flex items-center pr-[4px]">
          <span className="h-[2px] w-[6px] translate-y-[3px] bg-black" />
          <svg width="10" height="10" viewBox="0 0 10 10" className="ml-[9px]" fill="none" stroke="#000"><path d="M.5 3.500h6v6h-6zM.5 4.500h6M3.500 3V.5h6v6H7M3.500 1.500h6" /></svg>
          <X size={11} strokeWidth={2.25} className="ml-[10px]" />
        </div>
      </div>
      <Toolbar1 />
      {/* body */}
      <div className="flex h-[631px] shrink-0">
        <SideTabs />
        <div className="flex w-[155px] shrink-0 flex-col">
          <div className="flex h-[27px] shrink-0 items-center pl-[43px]">
            <span>分部分项</span>
            <X size={15} strokeWidth={3} className="ml-[41px]" />
          </div>
          <div className="pl-[4px]">
            <Tree />
            <BottomTabs />
          </div>
        </div>
        <div className="flex w-[7px] shrink-0 flex-col pt-[264px]">
          <div className="h-[69px] w-[6px] border border-[#9a9a9a] bg-[#f0f0f0]" />
        </div>
        <div className="flex w-[1179px] shrink-0 flex-col">
          <Toolbar2 />
          <TopGrid />
          <div className="flex h-[9px] shrink-0 justify-center pt-[2px]">
            <span className="h-[5px] w-[99px] border border-[#9a9a9a]" />
          </div>
          <LowerTabs />
          <div className="mt-[3px] flex">
            <LowerGrid />
            <RightPanel />
          </div>
        </div>
      </div>
      <StatusBar />
      <Taskbar />
      <SogouBar />
      {/* score badge from the system tray helper */}
      <div className="absolute left-[1075px] top-[-27px] z-20 flex h-[46px] w-[46px] items-end justify-center rounded-full border-[2px] border-[#d5d8d5] bg-[#3ec162] pb-[4px] text-[11px] font-bold text-white shadow-[0_2px_6px_rgba(0,0,0,0.35)]">72</div>
    </div>
  );
}
